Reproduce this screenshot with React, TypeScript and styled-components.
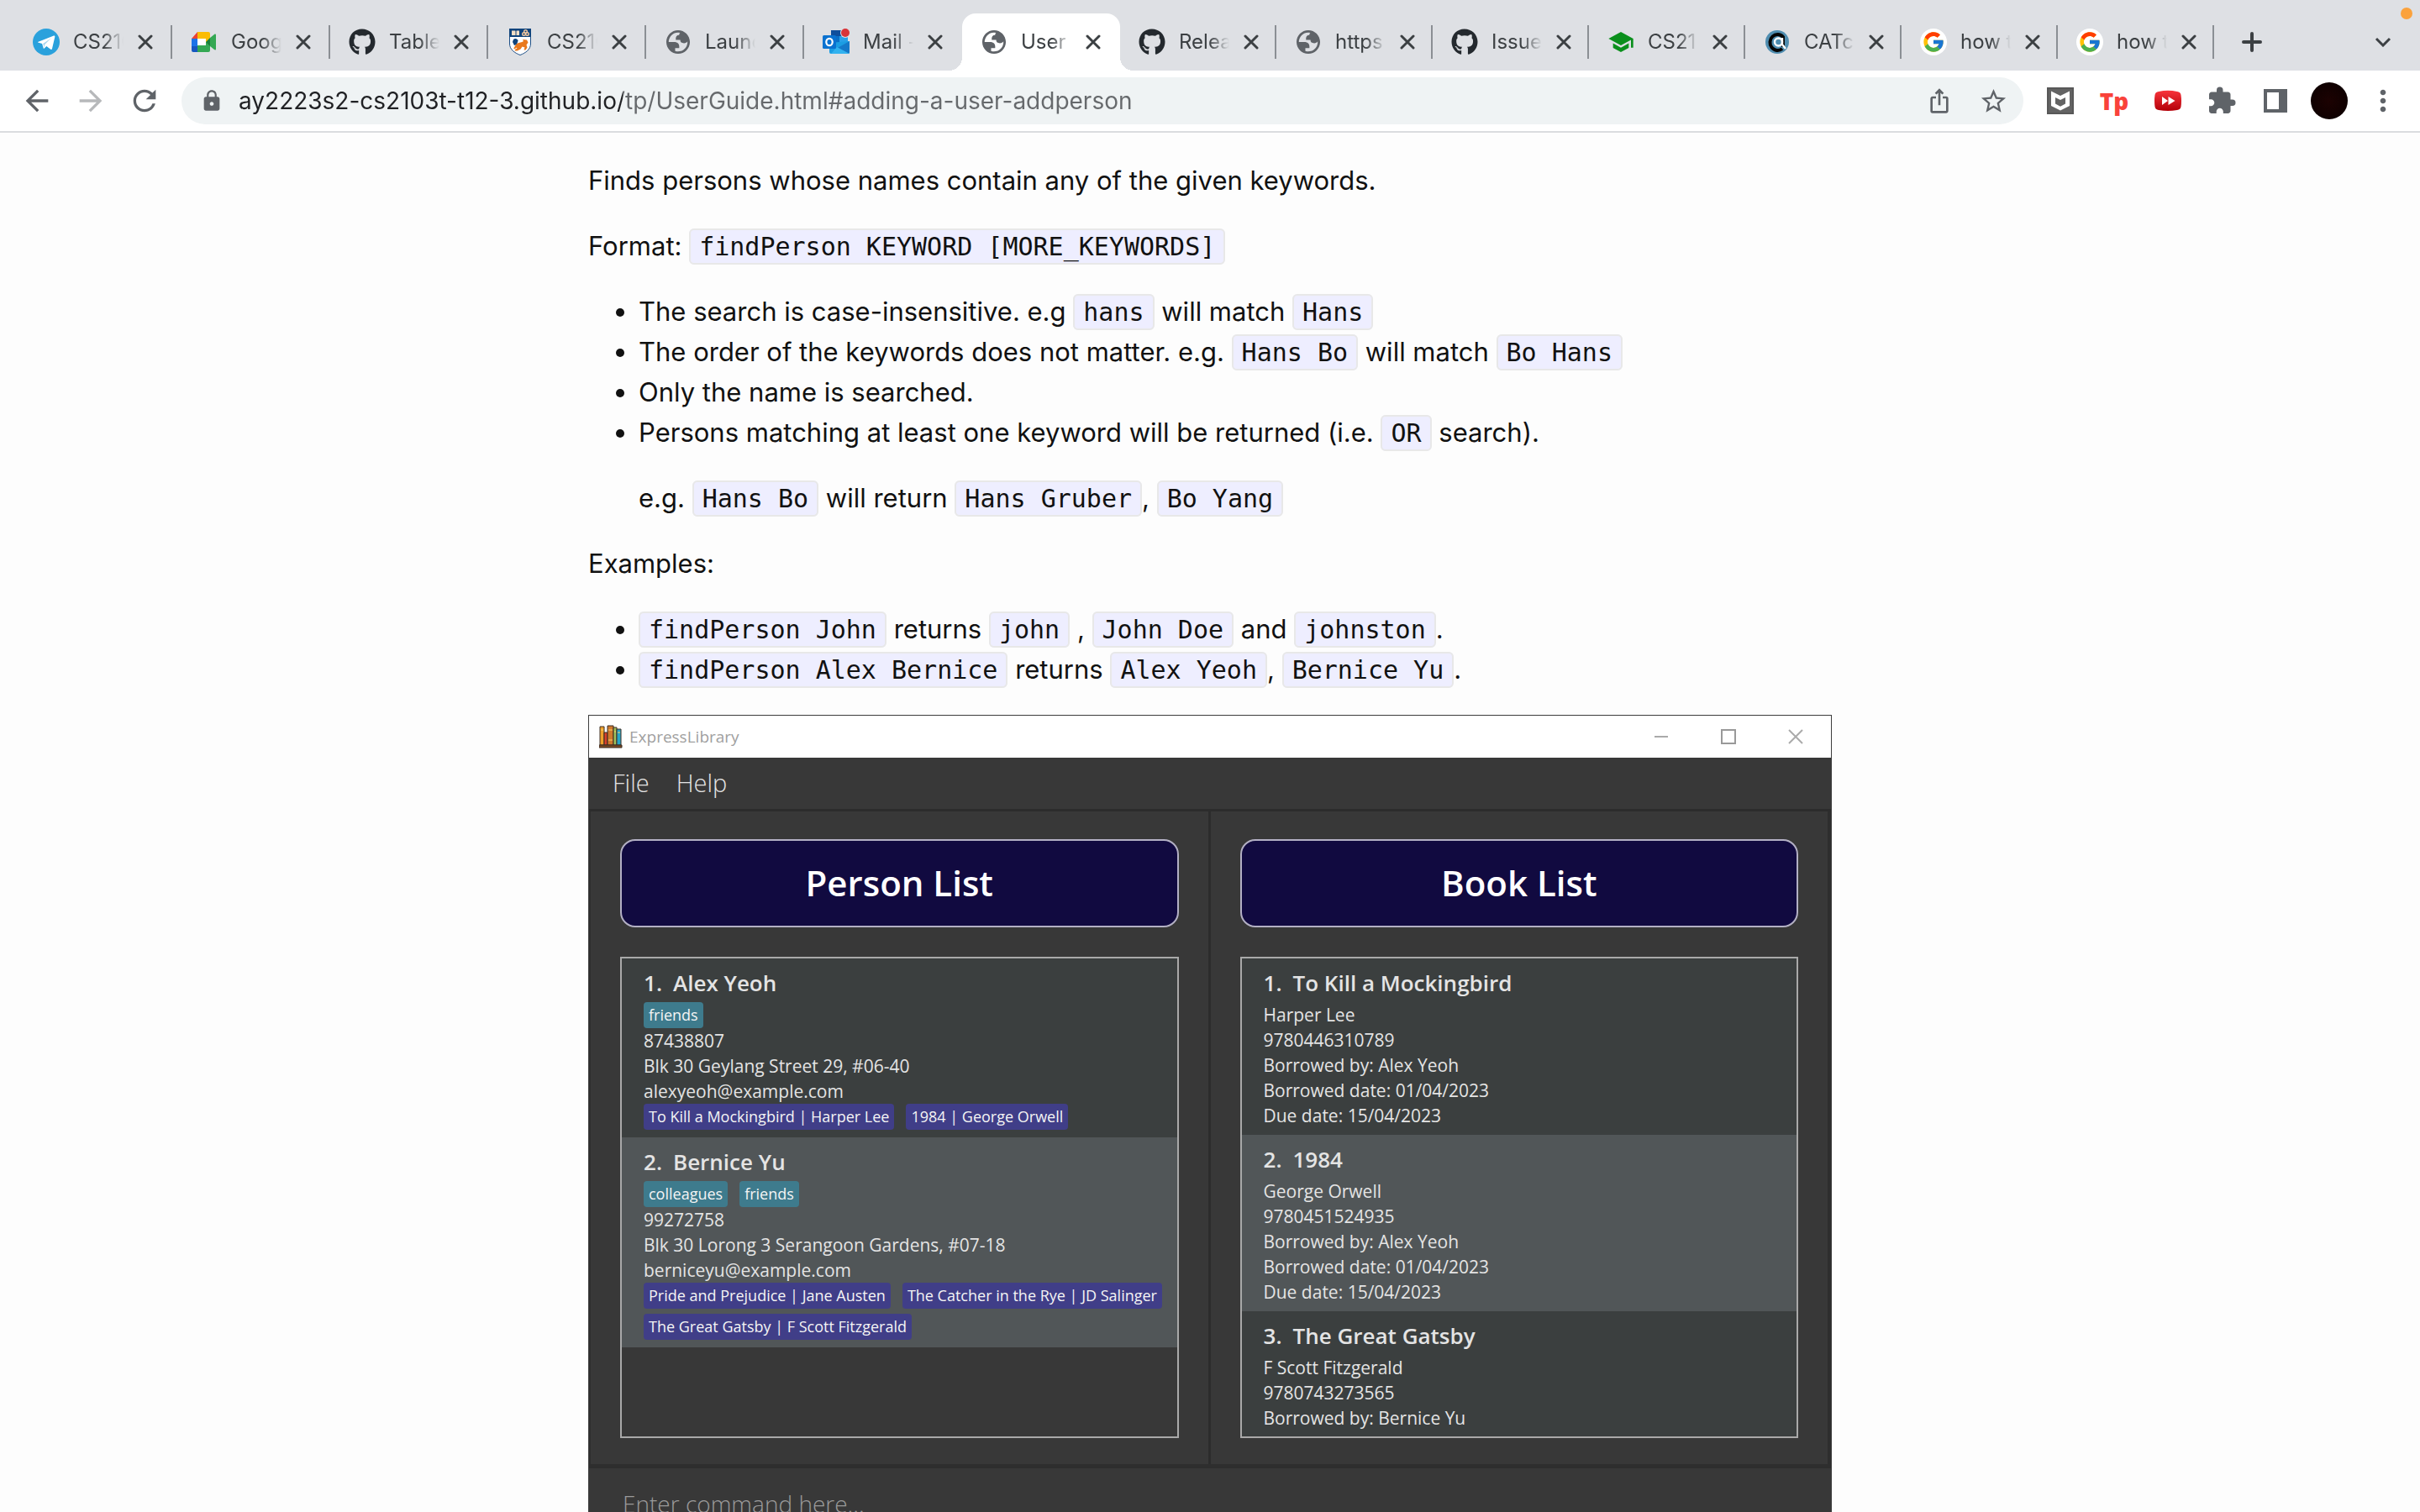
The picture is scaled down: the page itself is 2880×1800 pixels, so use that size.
import React from "react";
import styled, { createGlobalStyle, css } from "styled-components";
import { FcGoogle } from "react-icons/fc";
import { FaGithub } from "react-icons/fa";
import {
  MdArrowBack,
  MdArrowForward,
  MdExtension,
  MdIosShare,
  MdLock,
  MdMoreVert,
  MdRefresh,
  MdSchool,
  MdStarBorder,
} from "react-icons/md";

const uiFont = `Inter, "Liberation Sans", sans-serif`;
const appFont = `"Open Sans", "Noto Sans", sans-serif`;
const codeFont = `"DejaVu Sans Mono", "Liberation Mono", monospace`;

const GlobalStyle = createGlobalStyle`
  *, *::before, *::after { box-sizing: border-box; }
  body { margin: 0; background: #fdfdfd; font-family: ${uiFont}; }
  button, input { font: inherit; color: inherit; background: none; border: 0; padding: 0; margin: 0; outline: 0; }
  svg { display: block; flex: none; }
`;

const Browser = styled.div`
  display: flex;
  flex-direction: column;
  height: 100vh;
  overflow: hidden;
`;

/* ---------- tab strip ---------- */

const TabStrip = styled.header`
  position: relative;
  display: flex;
  flex: none;
  height: 84px;
  padding: 16px 34px 0 17px;
  background: #dee0e4;
  color: #3c4043;
`;

const Tabs = styled.nav`
  display: flex;
  flex: 0 1 2618px;
  min-width: 0;
`;

const TabItem = styled.div<{ $wide?: boolean; $active?: boolean }>`
  position: relative;
  display: flex;
  align-items: center;
  flex: 0 1 ${(p) => (p.$wide ? 188 : 186)}px;
  min-width: 0;
  padding-left: 22px;
  ${(p) =>
    p.$active &&
    css`
      background: #fff;
      border-radius: 16px 16px 0 0;
      &::before,
      &::after {
        content: "";
        position: absolute;
        bottom: 0;
        width: 16px;
        height: 16px;
      }
      &::before {
        right: 100%;
        background: radial-gradient(circle at 0 0, transparent 16px, #fff 16px);
      }
      &::after {
        left: 100%;
        background: radial-gradient(circle at 100% 0, transparent 16px, #fff 16px);
      }
    `}
`;

const TabButton = styled.button`
  display: flex;
  align-items: center;
  gap: 16px;
  min-width: 0;
`;

const TabTitle = styled.span`
  width: 60px;
  overflow: hidden;
  white-space: nowrap;
  text-align: left;
  font-size: 24px;
  line-height: 32px;
  mask-image: linear-gradient(to right, #000 36px, transparent 60px);
`;

const CloseButton = styled.button`
  display: grid;
  place-items: center;
  width: 26px;
  height: 26px;
  margin-left: 13px;
`;

const Separator = styled.span`
  width: 2px;
  height: 40px;
  margin-left: auto;
  background: #8b8f94;
`;

const NewTab = styled.button`
  display: grid;
  place-items: center;
  width: 40px;
  margin-left: 25px;
`;

const TabSearch = styled(NewTab)`
  width: 20px;
  margin-left: auto;
`;

const RecordingDot = styled.span`
  position: absolute;
  top: 9px;
  right: 9px;
  width: 14px;
  height: 14px;
  border-radius: 50%;
  background: #fba23c;
`;

/* ---------- toolbar ---------- */

const Toolbar = styled.div`
  display: flex;
  align-items: center;
  flex: none;
  height: 74px;
  padding: 0 12px;
  border-bottom: 2px solid #dadcdf;
  background: #fff;
  color: #5f6368;
`;

const NavButton = styled.button<{ $dim?: boolean }>`
  display: grid;
  place-items: center;
  width: 64px;
  height: 56px;
  opacity: ${(p) => (p.$dim ? 0.45 : 1)};
`;

const AddressBar = styled.div`
  display: flex;
  align-items: center;
  flex: 1;
  height: 56px;
  margin-left: 12px;
  padding: 0 4px 0 22px;
  border-radius: 28px;
  background: #eff3f4;
`;

const AddressInput = styled.input`
  flex: 1;
  min-width: 0;
  margin-left: 18px;
  font-size: 28px;
  line-height: 40px;
  color: transparent;
  background: linear-gradient(to right, #202124 457px, #66696c 457px);
  background-clip: text;
`;

const Extensions = styled.div`
  display: flex;
  align-items: center;
  margin-left: 12px;
`;

const TpLogo = styled.span`
  color: #f9423a;
  font: 800 28px/32px "Open Sans", sans-serif;
`;

const Avatar = styled.span`
  width: 44px;
  height: 44px;
  border-radius: 50%;
  background: radial-gradient(circle, #1c0202, #0a0000);
`;

/* ---------- guide page ---------- */

const Page = styled.main`
  flex: 1;
  min-height: 0;
  overflow: hidden;
  background: #fdfdfd;
  color: #111;
`;

const Article = styled.article`
  max-width: 1480px;
  margin: 0 auto;
  padding-top: 33px;
  font-size: 31px;
  line-height: 48px;
`;

const Para = styled.p`
  margin: 0 0 30px;
`;

const Bullets = styled.ul`
  margin: 0 0 30px;
  padding-left: 60px;
`;

const Nested = styled.p`
  margin: 30px 0;
`;

const Code = styled.code`
  padding: 2px 10px;
  border: 2px solid #e8e8e8;
  border-radius: 6px;
  background: #eeeeff;
  font: 30px/1 ${codeFont};
`;

/* ---------- ExpressLibrary window ---------- */

const AppFrame = styled.section`
  border: 1px solid #3c3c3c;
  background: #383838;
  font-family: ${appFont};
  color: #e4e4e4;
`;

const TitleBar = styled.div`
  display: flex;
  align-items: center;
  height: 50px;
  padding: 0 12px;
  background: #fff;
  color: #a0a0a0;
  font-size: 19px;
  line-height: 28px;
`;

const TitleText = styled.span`
  flex: 1;
  margin-left: 8px;
`;

const WindowButton = styled.button`
  display: grid;
  place-items: center;
  width: 60px;
  height: 48px;
  margin-left: 20px;
`;

const MenuBar = styled.nav`
  display: flex;
  gap: 32px;
  height: 64px;
  padding: 0 28px;
  border-bottom: 3px solid #2c2c2c;
  font-size: 29px;
  font-weight: 300;
`;

const MenuItem = styled.button`
  padding-bottom: 2px;
`;

const Panels = styled.div`
  display: grid;
  grid-template-columns: 1fr 3px 1fr;
  border: solid #2e2e2e;
  border-width: 0 4px 5px 2px;
`;

const Divider = styled.div`
  background: #2c2c2c;
`;

const Panel = styled.section`
  display: flex;
  flex-direction: column;
  gap: 35px;
  min-width: 0;
  padding: 33px 35px 31px;
`;

const PanelTitle = styled.h2`
  margin: 0;
  padding: 19px 20px 21px;
  border: 2px solid #b3b0c4;
  border-radius: 18px;
  background: #110a40;
  color: #fff;
  text-align: center;
  font-size: 42px;
  line-height: 61px;
  font-weight: 600;
`;

const CardList = styled.ol`
  height: 573px;
  margin: 0;
  padding: 0;
  border: 2px solid #a9a9a9;
  list-style: none;
  overflow: hidden;
`;

const Card = styled.li`
  padding: 11px 8px 8px 26px;
  background: #3b3f3f;
  font-size: 21px;
  line-height: 30px;
  &:nth-child(even) {
    background: #515658;
  }
`;

const PersonCard = styled(Card)`
  padding-bottom: 9px;
`;

const CardName = styled.h3`
  display: flex;
  gap: 13px;
  margin: 0 0 5px;
  font-size: 26px;
  line-height: 36px;
  font-weight: 600;
`;

const Tags = styled.div`
  display: flex;
  flex-wrap: wrap;
  gap: 6px 14px;
`;

const Tag = styled.span<{ $book?: boolean }>`
  padding: 0 6px;
  border-radius: 4px;
  background: ${(p) => (p.$book ? "#403e88" : "#3e7b8d")};
  color: #f4f4f4;
  font-size: 18px;
  line-height: 31px;
  font-weight: 500;
`;

const CommandInput = styled.input`
  display: block;
  width: 100%;
  padding: 22px 40px;
  font-size: 28px;
  line-height: 40px;
  font-weight: 300;
  &::placeholder {
    color: #9a9a9a;
    opacity: 1;
  }
`;

/* ---------- drawings ---------- */

const Telegram = () => (
  <svg width="32" height="32" viewBox="0 0 32 32">
    <circle cx="16" cy="16" r="16" fill="#2aa1dc" />
    <path d="M6 16 25 8.500c.9-.3 1.600.2 1.300 1.500L23 24c-.2 1-.9 1.200-1.700.8l-5-3.700-2.500 2.400c-.8.7-1 .2-1.200-.6l-1.500-5-5-1.500z" fill="#fff" />
    <path d="m12.200 18 9.500-6.500-7.600 7.800-.4 3.500z" fill="#a9d5ee" />
  </svg>
);

const Meet = () => (
  <svg width="32" height="32" viewBox="0 0 32 32">
    <path d="M1 12v9h7v-9z" fill="#1a73e8" />
    <path d="M1 21v5a2 2 0 0 0 2 2h5v-7z" fill="#1557c0" />
    <path d="M8 4 1 12h7z" fill="#ea4335" />
    <path d="M8 4h13a2 2 0 0 1 2 2v9l-5 1v-4H8z" fill="#fbbc04" />
    <path d="M8 28h13a2 2 0 0 0 2-2v-9l-5-1v4H8z" fill="#34a853" />
    <path d="m23 11 5-4c1-.8 2-.4 2 .8v16.400c0 1.200-1 1.600-2 .8l-5-4z" fill="#34a853" />
    <path d="m18 16 5-5v10z" fill="#188038" />
    <path d="M8 12h10v8H8z" fill="#fff" />
  </svg>
);

const Crest = () => (
  <svg width="32" height="32" viewBox="0 0 32 32">
    <path d="M3.500 1h25v17c0 7-6 11-12.500 13.500C9.500 29 3.500 25 3.500 18z" fill="#fff" stroke="#1d4f86" />
    <path d="M3 0h26v10H3z" fill="#10447c" />
    <path d="M6 2.500h4l1 .8 1-.8h3V8H6z" fill="#f3dfc6" />
    <path d="M11 3v5" stroke="#10447c" />
    <circle cx="22.500" cy="3.500" r="1.800" fill="none" stroke="#f0c7a0" strokeWidth="1.400" />
    <circle cx="20.500" cy="6.500" r="1.800" fill="none" stroke="#f0c7a0" strokeWidth="1.400" />
    <circle cx="24.500" cy="6.500" r="1.800" fill="none" stroke="#f0c7a0" strokeWidth="1.400" />
    <path d="M8 13c2-2 5-1 5.500 1.500L12 19l-3 1-2-4z" fill="#10447c" />
    <path d="M12 18c3-2 6-1 8-3l-1-2 5 .5 1.500 3-2 3 1 3-2 3h-2l1-3-3-1-2 3-4 2h-3l1-2 2-1-3-2z" fill="#e9781c" />
    <path d="m9 24 3-4" stroke="#e9781c" strokeWidth="2" />
  </svg>
);

const Globe = () => (
  <svg width="32" height="32" viewBox="0.600 0.600 22.800 22.800" fill="#5f6368" fillRule="evenodd">
    <path d="M12 2C6.480 2 2 6.480 2 12s4.480 10 10 10 10-4.480 10-10S17.520 2 12 2zM4 12h4.400c3.407.022 4.922 1.730 4.543 5.127H9.488v2.470a8.004 8.004 0 0 0 10.498-8.083C19.327 12.504 18.332 13 17 13c-2.137 0-3.206-.916-3.206-2.750h-3.748c-.274-2.728.683-4.092 2.870-4.092 0-.975.327-1.597.811-1.970A8.004 8.004 0 0 0 4 12z" />
  </svg>
);

const Outlook = () => (
  <svg width="32" height="32" viewBox="0 0 32 32">
    <path d="M10 2h13v14H10z" fill="#0f4f9c" />
    <path d="M17 9h13v9H17z" fill="#28a0e8" />
    <path d="M10 9h10v11H10z" fill="#0a6fc6" />
    <path d="M8 17 32 15v13a2 2 0 0 1-2 2H10a2 2 0 0 1-2-2z" fill="#1b9de2" />
    <path d="m32 15-16 9 14 6a2 2 0 0 0 2-2z" fill="#1479c9" />
    <path d="M32 30 17 22l-7 8z" fill="#32b2ef" />
    <rect y="8" width="16" height="16" rx="1.500" fill="#0a72d0" />
    <ellipse cx="8" cy="16" rx="3.700" ry="4.200" fill="none" stroke="#fff" strokeWidth="2.200" />
    <circle cx="27" cy="5" r="6" fill="#dee0e4" />
    <circle cx="27" cy="5" r="5" fill="#d93438" />
  </svg>
);

const Catcher = () => (
  <svg width="32" height="32" viewBox="0 0 32 32">
    <circle cx="16" cy="16" r="14" fill="#4f8db0" />
    <path d="M22 24a9 9.500 0 1 1 1-14v12" fill="none" stroke="#050505" strokeWidth="4" />
    <circle cx="17.500" cy="16" r="4.500" fill="none" stroke="#fff" strokeWidth="2.400" />
    <path d="M22 11v8l4 5" fill="none" stroke="#fff" strokeWidth="2.400" />
  </svg>
);

const GoogleDisc = styled.span`
  display: grid;
  place-items: center;
  width: 32px;
  height: 32px;
  border-radius: 50%;
  background: #fff;
`;

const Cross = () => (
  <svg width="18" height="18" viewBox="0 0 18 18" stroke="#3c4043" strokeWidth="3" strokeLinecap="round">
    <path d="m2 2 14 14M16 2 2 16" />
  </svg>
);

const Shield = () => (
  <svg width="32" height="32" viewBox="0 0 32 32">
    <path d="M0 0h32v32H0z" fill="#636363" />
    <path d="M1 1h30v30H1z" fill="none" stroke="#585858" strokeWidth="2" />
    <path d="M5 4.500 16 10l11-5.500V22l-11 5.500L5 22zm5 7.500v7.500l6 3.200 6-3.200V12l-6 3z" fill="#fff" fillRule="evenodd" />
  </svg>
);

const FastForward = () => (
  <svg width="32" height="32" viewBox="0 0 32 32">
    <defs>
      <linearGradient id="redFade" x2="0" y2="1">
        <stop stopColor="#f8343b" />
        <stop offset="1" stopColor="#b30009" />
      </linearGradient>
    </defs>
    <path d="M5 5q11-2.500 22 0 4 .5 4.500 4 1 7 0 14-.5 3.500-4.500 4-11 2-22 0-4-.5-4.500-4-1-7 0-14Q1 5.500 5 5z" fill="url(#redFade)" />
    <path d="M9 11v10l7-5zM16.500 11v10l8-5z" fill="#fff" />
  </svg>
);

const SidePanel = () => (
  <svg width="28" height="28" viewBox="0 0 28 28">
    <path d="M0 0h28v28H0zM4 4v20h14V4z" fill="#5f6368" fillRule="evenodd" />
  </svg>
);

const Books = () => (
  <svg width="28" height="28" viewBox="0 0 28 28" stroke="#3a2c22" strokeWidth="1">
    <path d="M1 2h5v22H1z" fill="#f0a12c" />
    <path d="M6 9h4v15H6z" fill="#d8402c" />
    <path d="M10 1h7v23h-7z" fill="#d0792e" />
    <path d="M17 3h4v21h-4z" fill="#9fbf5a" />
    <path d="M21 5h5v19h-5z" fill="#28a5c8" />
    <path d="M11 6h5M11 18h5M2 6h3M22 9h3M18 8h2" stroke="#f7d36b" />
    <path d="M0 24h27v3H0z" fill="#7a4a25" />
  </svg>
);

const tabs: { title: string; icon: React.ReactNode; active?: boolean; beforeActive?: boolean }[] = [
  { title: "CS210", icon: <Telegram /> },
  { title: "Goog", icon: <Meet /> },
  { title: "Table", icon: <FaGithub size={32} color="#24292e" /> },
  { title: "CS210", icon: <Crest /> },
  { title: "Launc", icon: <Globe /> },
  { title: "Mail -", icon: <Outlook />, beforeActive: true },
  { title: "User", icon: <Globe />, active: true },
  { title: "Relea", icon: <FaGithub size={32} color="#24292e" /> },
  { title: "https", icon: <Globe /> },
  { title: "Issue", icon: <FaGithub size={32} color="#24292e" /> },
  { title: "CS21", icon: <MdSchool size={32} color="#0a8f1c" /> },
  { title: "CATch", icon: <Catcher /> },
  { title: "how t", icon: <GoogleDisc><FcGoogle size={28} /></GoogleDisc> },
  { title: "how t", icon: <GoogleDisc><FcGoogle size={28} /></GoogleDisc> },
];

const people = [
  {
    name: "Alex Yeoh",
    tags: ["friends"],
    lines: ["87438807", "Blk 30 Geylang Street 29, #06-40", "alexyeoh@example.com"],
    books: ["To Kill a Mockingbird | Harper Lee", "1984 | George Orwell"],
  },
  {
    name: "Bernice Yu",
    tags: ["colleagues", "friends"],
    lines: ["99272758", "Blk 30 Lorong 3 Serangoon Gardens, #07-18", "berniceyu@example.com"],
    books: [
      "Pride and Prejudice | Jane Austen",
      "The Catcher in the Rye | JD Salinger",
      "The Great Gatsby | F Scott Fitzgerald",
    ],
  },
];

const books = [
  {
    name: "To Kill a Mockingbird",
    lines: ["Harper Lee", "9780446310789", "Borrowed by: Alex Yeoh", "Borrowed date: 01/04/2023", "Due date: 15/04/2023"],
  },
  {
    name: "1984",
    lines: ["George Orwell", "9780451524935", "Borrowed by: Alex Yeoh", "Borrowed date: 01/04/2023", "Due date: 15/04/2023"],
  },
  {
    name: "The Great Gatsby",
    lines: ["F Scott Fitzgerald", "9780743273565", "Borrowed by: Bernice Yu", "Borrowed date: 01/04/2023"],
  },
];

function LibraryWindow() {
  return (
    <AppFrame aria-label="ExpressLibrary">
      <TitleBar>
        <Books />
        <TitleText>ExpressLibrary</TitleText>
        <WindowButton aria-label="Minimize">
          <svg width="18" height="18" viewBox="0 0 18 18" stroke="#aaa" strokeWidth="2"><path d="M1 9h16" /></svg>
        </WindowButton>
        <WindowButton aria-label="Maximize">
          <svg width="18" height="18" viewBox="0 0 18 18" stroke="#999" strokeWidth="2" fill="none"><path d="M1 1h16v16H1z" /></svg>
        </WindowButton>
        <WindowButton aria-label="Close">
          <svg width="18" height="18" viewBox="0 0 18 18" stroke="#aaa" strokeWidth="2"><path d="m1 1 16 16M17 1 1 17" /></svg>
        </WindowButton>
      </TitleBar>
      <MenuBar>
        <MenuItem>File</MenuItem>
        <MenuItem>Help</MenuItem>
      </MenuBar>
      <Panels>
        <Panel>
          <PanelTitle>Person List</PanelTitle>
          <CardList>
            {people.map((p, i) => (
              <PersonCard key={p.name}>
                <CardName><span>{i + 1}.</span><span>{p.name}</span></CardName>
                <Tags>{p.tags.map((t) => <Tag key={t}>{t}</Tag>)}</Tags>
                {p.lines.map((l) => <div key={l}>{l}</div>)}
                <Tags>{p.books.map((b) => <Tag $book key={b}>{b}</Tag>)}</Tags>
              </PersonCard>
            ))}
          </CardList>
        </Panel>
        <Divider />
        <Panel>
          <PanelTitle>Book List</PanelTitle>
          <CardList>
            {books.map((b, i) => (
              <Card key={b.name}>
                <CardName><span>{i + 1}.</span><span>{b.name}</span></CardName>
                {b.lines.map((l) => <div key={l}>{l}</div>)}
              </Card>
            ))}
          </CardList>
        </Panel>
      </Panels>
      <CommandInput aria-label="Command" placeholder="Enter command here..." />
    </AppFrame>
  );
}

export default function App() {
  return (
    <Browser>
      <GlobalStyle />
      <TabStrip>
        <Tabs aria-label="Open tabs">
          {tabs.map((t, i) => (
            <TabItem key={i} $wide={i < 7} $active={t.active}>
              <TabButton>
                {t.icon}
                <TabTitle>{t.title}</TabTitle>
              </TabButton>
              <CloseButton aria-label="Close tab"><Cross /></CloseButton>
              {!t.active && !t.beforeActive && <Separator />}
            </TabItem>
          ))}
        </Tabs>
        <NewTab aria-label="New tab">
          <svg width="24" height="24" viewBox="0 0 24 24" stroke="#3c4043" strokeWidth="4" strokeLinecap="round"><path d="M12 2v20M2 12h20" /></svg>
        </NewTab>
        <TabSearch aria-label="Search tabs">
          <svg width="20" height="12" viewBox="0 0 20 12" fill="none" stroke="#3c4043" strokeWidth="3"><path d="m2 2 8 8 8-8" /></svg>
        </TabSearch>
        <RecordingDot />
      </TabStrip>
      <Toolbar>
        <NavButton aria-label="Back"><MdArrowBack size={40} /></NavButton>
        <NavButton aria-label="Forward" $dim><MdArrowForward size={40} /></NavButton>
        <NavButton aria-label="Reload"><MdRefresh size={40} /></NavButton>
        <AddressBar>
          <MdLock size={28} />
          <AddressInput
            aria-label="Address"
            defaultValue="ay2223s2-cs2103t-t12-3.github.io/tp/UserGuide.html#adding-a-user-addperson"
          />
          <NavButton aria-label="Share"><MdIosShare size={32} /></NavButton>
          <NavButton aria-label="Bookmark"><MdStarBorder size={35} /></NavButton>
        </AddressBar>
        <Extensions>
          <NavButton aria-label="Security extension"><Shield /></NavButton>
          <NavButton aria-label="Tp extension"><TpLogo>Tp</TpLogo></NavButton>
          <NavButton aria-label="Video extension"><FastForward /></NavButton>
          <NavButton aria-label="Extensions"><MdExtension size={36} /></NavButton>
          <NavButton aria-label="Side panel"><SidePanel /></NavButton>
          <NavButton aria-label="Profile"><Avatar /></NavButton>
          <NavButton aria-label="Menu"><MdMoreVert size={40} /></NavButton>
        </Extensions>
      </Toolbar>
      <Page>
        <Article>
          <Para>Finds persons whose names contain any of the given keywords.</Para>
          <Para>Format: <Code>findPerson KEYWORD [MORE_KEYWORDS]</Code></Para>
          <Bullets>
            <li>The search is case-insensitive. e.g <Code>hans</Code> will match <Code>Hans</Code></li>
            <li>The order of the keywords does not matter. e.g. <Code>Hans Bo</Code> will match <Code>Bo Hans</Code></li>
            <li>Only the name is searched.</li>
            <li>
              Persons matching at least one keyword will be returned (i.e. <Code>OR</Code> search).
              <Nested>e.g. <Code>Hans Bo</Code> will return <Code>Hans Gruber</Code>, <Code>Bo Yang</Code></Nested>
            </li>
          </Bullets>
          <Para>Examples:</Para>
          <Bullets>
            <li><Code>findPerson John</Code> returns <Code>john</Code> , <Code>John Doe</Code> and <Code>johnston</Code>.</li>
            <li><Code>findPerson Alex Bernice</Code> returns <Code>Alex Yeoh</Code>, <Code>Bernice Yu</Code>.</li>
          </Bullets>
          <LibraryWindow />
        </Article>
      </Page>
    </Browser>
  );
}
